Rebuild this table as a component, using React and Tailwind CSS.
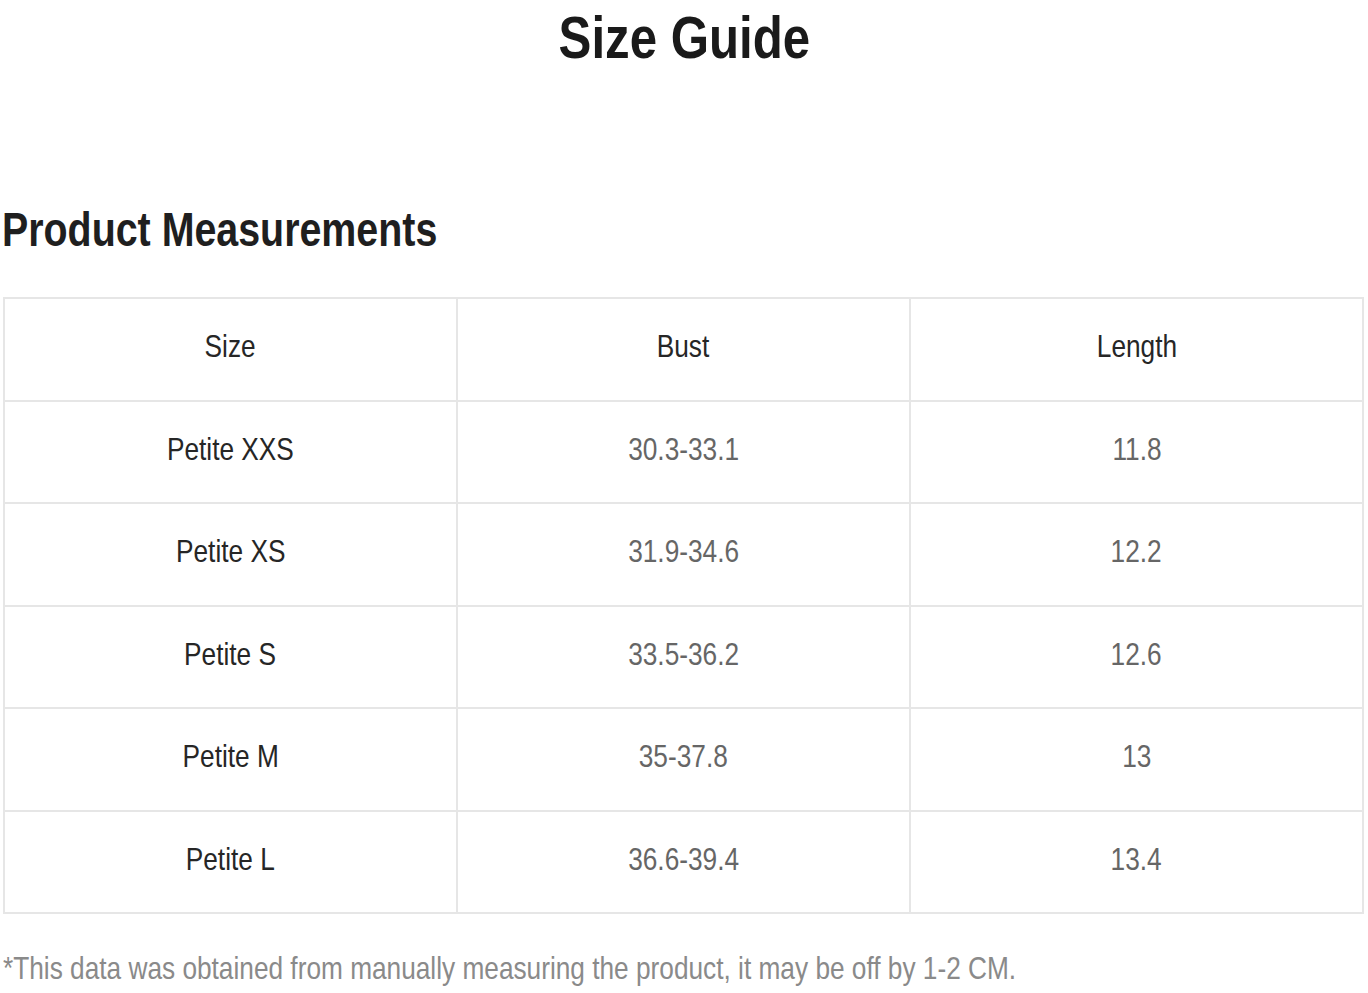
import React from 'react';

const rows = [
  { size: 'Petite XXS', bust: '30.3-33.1', length: '11.8' },
  { size: 'Petite XS', bust: '31.9-34.6', length: '12.2' },
  { size: 'Petite S', bust: '33.5-36.2', length: '12.6' },
  { size: 'Petite M', bust: '35-37.8', length: '13' },
  { size: 'Petite L', bust: '36.6-39.4', length: '13.4' },
];

const cell = 'border-2 border-[#e6e6e6] h-[102.5px] text-center align-middle p-0 pb-[6px]';

// the source artwork uses a narrow face; squeeze Liberation Sans to match
function Narrow({ children, left }) {
  return (
    <span className={`inline-block whitespace-nowrap scale-x-[0.82] ${left ? 'origin-left' : 'origin-center'}`}>
      {children}
    </span>
  );
}

export default function App() {
  return (
    <div className="w-[1368px] min-h-[993px] bg-white font-['Liberation_Sans','Arial',sans-serif]">
      <h1 className="pt-[8px] text-center text-[60px] leading-none font-bold text-[#1a1a1a]">
        <Narrow>Size Guide</Narrow>
      </h1>

      <h2 className="mt-[138px] ml-[2px] text-[48px] leading-none font-bold text-[#1f1f1f]">
        <Narrow left>Product Measurements</Narrow>
      </h2>

      <table className="mt-[43px] ml-[3px] w-[1361px] table-fixed border-collapse text-[32px] leading-none">
        <thead>
          <tr>
            <th className={`${cell} font-normal text-[#262626]`}><Narrow>Size</Narrow></th>
            <th className={`${cell} font-normal text-[#262626]`}><Narrow>Bust</Narrow></th>
            <th className={`${cell} font-normal text-[#262626]`}><Narrow>Length</Narrow></th>
          </tr>
        </thead>
        <tbody>
          {rows.map((r) => (
            <tr key={r.size}>
              <td className={`${cell} text-[#262626]`}><Narrow>{r.size}</Narrow></td>
              <td className={`${cell} text-[#666666]`}><Narrow>{r.bust}</Narrow></td>
              <td className={`${cell} text-[#666666]`}><Narrow>{r.length}</Narrow></td>
            </tr>
          ))}
        </tbody>
      </table>

      <p className="mt-[38px] ml-[3px] text-[32px] leading-none text-[#8a8a8a]">
        <Narrow left>*This data was obtained from manually measuring the product, it may be off by 1-2 CM.</Narrow>
      </p>
    </div>
  );
}
